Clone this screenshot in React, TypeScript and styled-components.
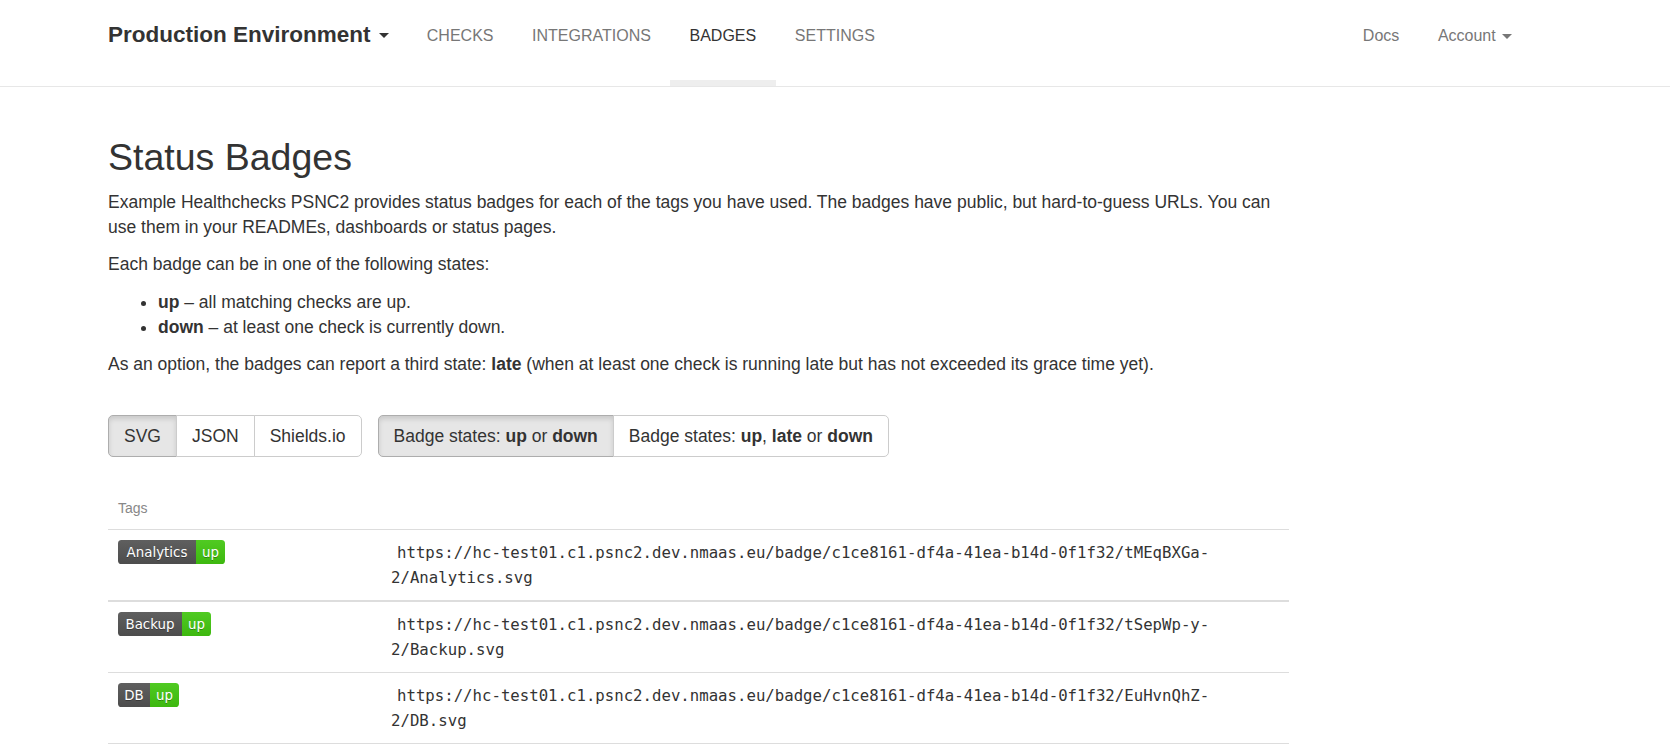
import styled, { createGlobalStyle } from "styled-components";

const GlobalStyle = createGlobalStyle`
  html, body {
    margin: 0;
    padding: 0;
    background: #fff;
  }
  body {
    font-family: "Liberation Sans", Arial, Helvetica, sans-serif;
    font-size: 17.5px;
    line-height: 1.42857;
    color: #333;
  }
  * {
    box-sizing: border-box;
  }
`;

const Navbar = styled.nav`
  display: flex;
  align-items: flex-start;
  height: 87px;
  padding: 0 139px 0 108px;
  border-bottom: 1px solid #e7e7e7;
  background: #fff;
`;

const Brand = styled.a`
  display: flex;
  align-items: center;
  gap: 8px;
  margin-right: 19px;
  padding-top: 23px;
  font-size: 22.5px;
  line-height: 24px;
  font-weight: bold;
  color: #333;
  cursor: pointer;
`;

const Caret = styled.span<{ $color: string }>`
  display: inline-block;
  width: 0;
  height: 0;
  border-top: 5px solid ${(p) => p.$color};
  border-left: 5px solid transparent;
  border-right: 5px solid transparent;
`;

const NavList = styled.ul`
  display: flex;
  margin: 0;
  padding: 0;
  list-style: none;
`;

const RightNav = styled(NavList)`
  margin-left: auto;
`;

const NavLink = styled.a<{ $active?: boolean; $upper?: boolean }>`
  display: flex;
  align-items: flex-start;
  gap: 6px;
  height: 86px;
  padding: 24px 19.3px 0;
  border-bottom: 6px solid ${(p) => (p.$active ? "#eee" : "transparent")};
  font-size: 16px;
  line-height: 23px;
  text-transform: ${(p) => (p.$upper ? "uppercase" : "none")};
  color: ${(p) => (p.$active ? "#333" : "#777")};
  text-decoration: none;
  cursor: pointer;

  ${Caret} {
    margin-top: 10px;
  }
`;

const Main = styled.main`
  width: 1181px;
  margin-left: 108px;
  padding-top: 50px;
`;

const Title = styled.h1`
  margin: 0 0 11.5px;
  font-size: 37.5px;
  font-weight: normal;
  line-height: 1.1;
`;

const Para = styled.p`
  margin: 0 0 12.5px;
`;

const StateList = styled.ul`
  margin: 0 0 12.5px;
  padding-left: 50px;
`;

const ButtonRow = styled.div`
  display: flex;
  gap: 16px;
  margin-top: 38px;
`;

const ButtonGroup = styled.div`
  display: inline-flex;
`;

const ToggleButton = styled.button<{ $active?: boolean }>`
  margin: 0 0 0 -1px;
  padding: 7.5px 15px;
  font-family: inherit;
  font-size: 17.5px;
  line-height: 1.42857;
  color: #333;
  background: ${(p) => (p.$active ? "#e6e6e6" : "#fff")};
  border: 1px solid ${(p) => (p.$active ? "#adadad" : "#ccc")};
  box-shadow: ${(p) => (p.$active ? "inset 0 3px 5px rgba(0, 0, 0, 0.125)" : "none")};
  border-radius: 0;
  cursor: pointer;

  &:first-child {
    margin-left: 0;
    border-radius: 5px 0 0 5px;
  }
  &:last-child {
    border-radius: 0 5px 5px 0;
  }
`;

const Table = styled.table`
  width: 100%;
  margin-top: 27px;
  border-collapse: collapse;
  table-layout: fixed;
`;

const HeadCell = styled.th<{ $width?: number }>`
  width: ${(p) => (p.$width ? `${p.$width}px` : "auto")};
  padding: 12px 10px 8px;
  font-size: 14px;
  line-height: 25px;
  font-weight: normal;
  color: #888;
  text-align: left;
  border-bottom: 1px solid #ddd;
`;

const Row = styled.tr<{ $thick?: boolean }>`
  border-top: ${(p) => (p.$thick ? "2px" : "1px")} solid #ddd;

  &:last-child {
    border-bottom: 1px solid #ddd;
  }
`;

const BadgeCell = styled.td`
  padding: 10px;
  vertical-align: top;
`;

const UrlCell = styled.td`
  padding: 10px;
  vertical-align: top;
  font-family: "DejaVu Sans Mono", "Liberation Mono", monospace;
  font-size: 15.7px;
  line-height: 25px;
`;

const Url = styled.code`
  padding: 0 6px;
  font-family: inherit;
  color: #333;
`;

interface BadgeProps {
  label: string;
  labelWidth: number;
  status: string;
}

function Badge({ label, labelWidth, status }: BadgeProps) {
  const statusWidth = 29;
  const width = labelWidth + statusWidth;
  const id = `g-${label}`;
  return (
    <svg width={width} height={24} viewBox={`0 0 ${width} 24`} style={{ display: "block" }}>
      <defs>
        <linearGradient id={id} x2="0" y2="100%">
          <stop offset="0" stopColor="#bbb" stopOpacity=".1" />
          <stop offset="1" stopOpacity=".1" />
        </linearGradient>
        <clipPath id={`c-${label}`}>
          <rect width={width} height="24" rx="3.6" />
        </clipPath>
      </defs>
      <g clipPath={`url(#c-${label})`}>
        <rect width={labelWidth} height="24" fill="#555" />
        <rect x={labelWidth} width={statusWidth} height="24" fill="#4c1" />
        <rect width={width} height="24" fill={`url(#${id})`} />
      </g>
      <g
        fill="#fff"
        textAnchor="middle"
        fontFamily="DejaVu Sans, Verdana, sans-serif"
        fontSize="13.4"
      >
        <text x={labelWidth / 2} y="17.5" fill="#010101" fillOpacity=".3">
          {label}
        </text>
        <text x={labelWidth / 2} y="16.5">
          {label}
        </text>
        <text x={labelWidth + statusWidth / 2} y="17.5" fill="#010101" fillOpacity=".3">
          {status}
        </text>
        <text x={labelWidth + statusWidth / 2} y="16.5">
          {status}
        </text>
      </g>
    </svg>
  );
}

const BASE = "https://hc-test01.c1.psnc2.dev.nmaas.eu/badge/c1ce8161-df4a-41ea-b14d-0f1f32/";

const badges = [
  { tag: "Analytics", key: "tMEqBXGa-2", width: 78 },
  { tag: "Backup", key: "tSepWp-y-2", width: 64 },
  { tag: "DB", key: "EuHvnQhZ-2", width: 32 },
];

export default function App() {
  return (
    <>
      <GlobalStyle />
      <Navbar>
        <Brand>
          Production Environment
          <Caret $color="#333" />
        </Brand>
        <NavList>
          <li>
            <NavLink $upper>Checks</NavLink>
          </li>
          <li>
            <NavLink $upper>Integrations</NavLink>
          </li>
          <li>
            <NavLink $upper $active>
              Badges
            </NavLink>
          </li>
          <li>
            <NavLink $upper>Settings</NavLink>
          </li>
        </NavList>
        <RightNav>
          <li>
            <NavLink>Docs</NavLink>
          </li>
          <li>
            <NavLink>
              Account
              <Caret $color="#777" />
            </NavLink>
          </li>
        </RightNav>
      </Navbar>

      <Main>
        <Title>Status Badges</Title>
        <Para>
          Example Healthchecks PSNC2 provides status badges for each of the tags you have used. The
          badges have public, but hard-to-guess URLs. You can use them in your READMEs, dashboards
          or status pages.
        </Para>
        <Para>Each badge can be in one of the following states:</Para>
        <StateList>
          <li>
            <b>up</b> – all matching checks are up.
          </li>
          <li>
            <b>down</b> – at least one check is currently down.
          </li>
        </StateList>
        <Para>
          As an option, the badges can report a third state: <b>late</b> (when at least one check is
          running late but has not exceeded its grace time yet).
        </Para>

        <ButtonRow>
          <ButtonGroup>
            <ToggleButton $active>SVG</ToggleButton>
            <ToggleButton>JSON</ToggleButton>
            <ToggleButton>Shields.io</ToggleButton>
          </ButtonGroup>
          <ButtonGroup>
            <ToggleButton $active>
              Badge states: <b>up</b> or <b>down</b>
            </ToggleButton>
            <ToggleButton>
              Badge states: <b>up</b>, <b>late</b> or <b>down</b>
            </ToggleButton>
          </ButtonGroup>
        </ButtonRow>

        <Table>
          <thead>
            <tr>
              <HeadCell $width={273}>Tags</HeadCell>
              <HeadCell />
            </tr>
          </thead>
          <tbody>
            {badges.map((b, i) => (
              <Row key={b.tag} $thick={i === 1}>
                <BadgeCell>
                  <Badge label={b.tag} labelWidth={b.width} status="up" />
                </BadgeCell>
                <UrlCell>
                  <Url>
                    {BASE}
                    {b.key}/{b.tag}.svg
                  </Url>
                </UrlCell>
              </Row>
            ))}
          </tbody>
        </Table>
      </Main>
    </>
  );
}
